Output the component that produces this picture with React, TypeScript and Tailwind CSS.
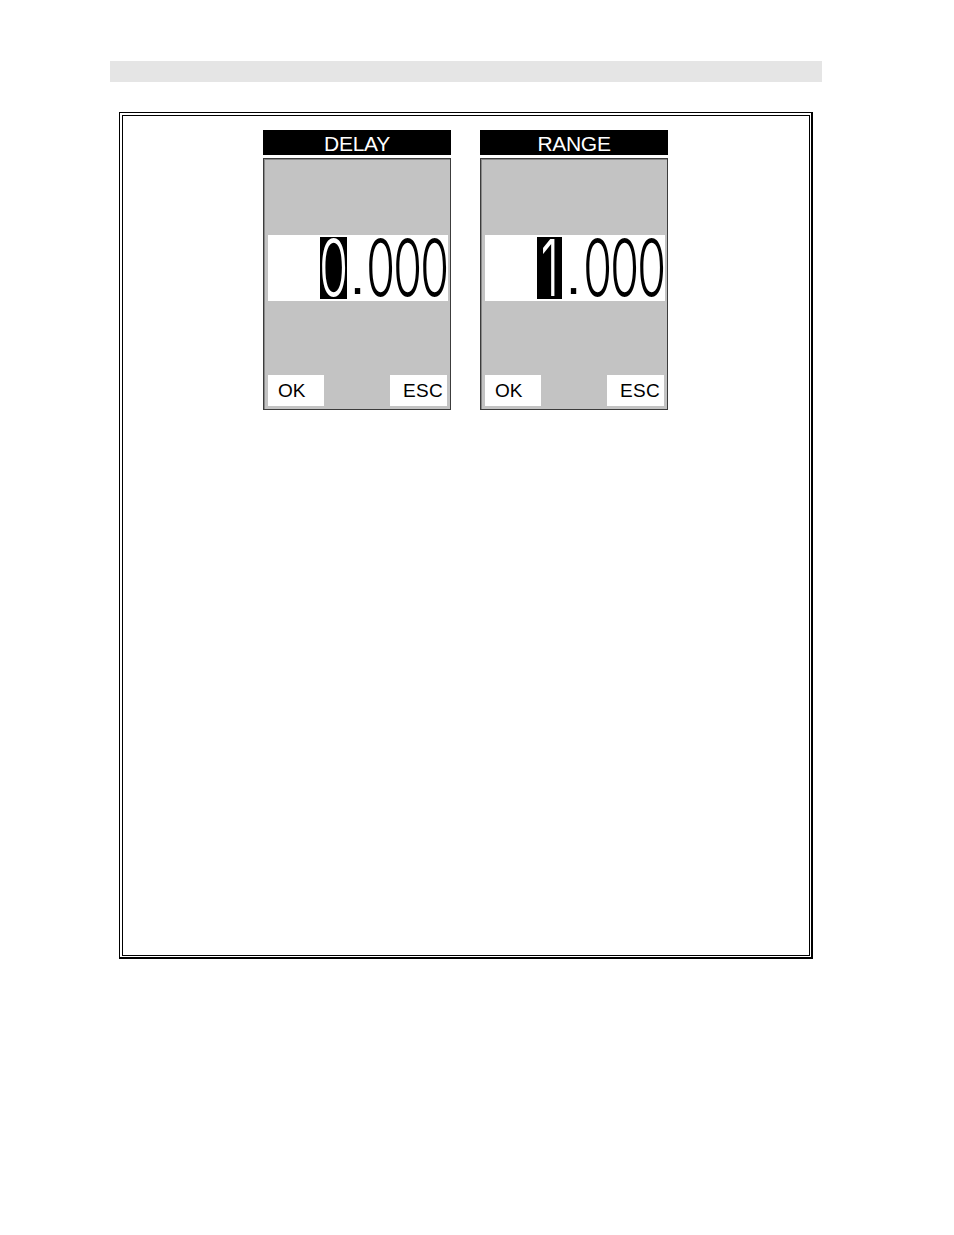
import React from "react";

function Digit({ ch, hi = false }: { ch: string; hi?: boolean }) {
  return (
    <div
      className={
        "flex h-[62px] w-[27px] items-center justify-center " +
        (hi ? "bg-black text-white" : "text-black")
      }
    >
      <span
        className="block scale-x-[1.06] scale-y-[1.78] text-[44px] font-light leading-none"
        style={{ fontFamily: "Inter, 'Liberation Sans', sans-serif" }}
      >
        {ch}
      </span>
    </div>
  );
}

function Panel({ title, lead }: { title: string; lead: string }) {
  return (
    <div className="flex w-[188px] flex-col">
      <div className="h-[25px] bg-black pt-[3px] text-center text-[21px] leading-[22px] tracking-[-0.3px] text-white">
        {title}
      </div>
      <div className="mt-[3px] h-[252px] border border-[#3c3c3c] bg-[#c3c3c3] pl-[4px] pr-[3px] pt-[76px] shadow-[inset_1px_1px_0_#8a8a8a]">
        <div className="h-[66px] w-[180px] overflow-hidden bg-white pt-[2px]">
          <div className="ml-[52px] flex h-[62px]">
            <Digit ch={lead} hi />
            <div className="flex h-[62px] w-[24px] items-end justify-center pl-[1px]">
              <span className="mb-[-4px] block text-[56px] leading-none">.</span>
            </div>
            <Digit ch="0" />
            <Digit ch="0" />
            <Digit ch="0" />
          </div>
        </div>
        <div className="mt-[74px] flex h-[31px] justify-between">
          <div className="w-[56px] bg-white pl-[10px] pt-[1px] text-[19px] leading-[30px] text-black">
            OK
          </div>
          <div className="w-[57px] bg-white pr-[4px] pt-[1px] text-right text-[19px] leading-[30px] tracking-[0.3px] text-black">
            ESC
          </div>
        </div>
      </div>
    </div>
  );
}

export default function App() {
  return (
    <div
      className="h-[1235px] w-[954px] overflow-hidden bg-white"
      style={{ fontFamily: "'Liberation Sans', Arial, sans-serif" }}
    >
      <div className="pl-[110px] pt-[61px]">
        <div className="h-[21px] w-[712px] bg-[#e5e5e5]" />
      </div>
      <div className="ml-[119px] mt-[30px] h-[847px] w-[694px] border-b-2 border-l border-r-2 border-t border-black pb-[1px] pl-[2px] pr-[1px] pt-[2px]">
        <div className="flex h-[841px] w-[688px] items-start gap-[29px] border border-black pl-[140px] pt-[14px]">
          <Panel title="DELAY" lead="0" />
          <Panel title="RANGE" lead="1" />
        </div>
      </div>
    </div>
  );
}
